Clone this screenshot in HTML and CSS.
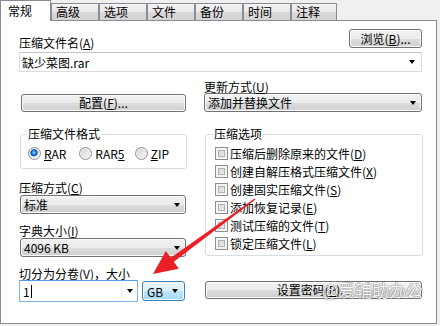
FILE: index.html
```html
<!DOCTYPE html>
<html lang="zh-CN">
<head>
    <meta charset="UTF-8">
    <title>压缩文件名和参数</title>
    <link rel="stylesheet" href="styles.css">
</head>
<body>
    <div class="dialog">
        <div class="tabs">
            <div class="tab active">常规</div>
            <div class="tab">高级</div>
            <div class="tab">选项</div>
            <div class="tab">文件</div>
            <div class="tab">备份</div>
            <div class="tab">时间</div>
            <div class="tab">注释</div>
        </div>

        <div class="panel">
            <div class="row-top">
                <div class="lbl">压缩文件名(<u>A</u>)</div>
                <button class="btn btn-browse">浏览(<u>B</u>)...</button>
            </div>
            <div class="combo combo-name">
                <span>缺少菜图.rar</span>
                <i class="arrow"></i>
            </div>

            <div class="cols row-mid">
                <div class="col">
                    <button class="btn btn-config">配置(<u>F</u>)...</button>
                </div>
                <div class="col">
                    <div class="lbl">更新方式(<u>U</u>)</div>
                    <div class="drop">添加并替换文件<i class="arrow"></i></div>
                </div>
            </div>

            <div class="cols row-low">
                <div class="col">
                    <fieldset class="group group-format">
                        <legend>压缩文件格式</legend>
                        <div class="radios">
                            <span class="radio on"><i></i><span><u>R</u>AR</span></span>
                            <span class="radio"><i></i><span>RAR<u>5</u></span></span>
                            <span class="radio"><i></i><span><u>Z</u>IP</span></span>
                        </div>
                    </fieldset>

                    <div class="lbl lbl-field">压缩方式(<u>C</u>)</div>
                    <div class="drop drop-left">标准<i class="arrow"></i></div>

                    <div class="lbl lbl-field">字典大小(<u>I</u>)</div>
                    <div class="drop drop-left">4096 KB<i class="arrow"></i></div>

                    <div class="lbl lbl-field">切分为分卷(<u>V</u>)，大小</div>
                    <div class="split">
                        <div class="combo combo-vol">
                            <span>1</span><span class="caret"></span>
                            <span class="arrow-box"><i class="arrow"></i></span>
                        </div>
                        <div class="drop drop-hot">GB<i class="arrow"></i></div>
                    </div>
                </div>

                <div class="col">
                    <fieldset class="group group-opts">
                        <legend>压缩选项</legend>
                        <div class="check"><i></i><span>压缩后删除原来的文件(<u>D</u>)</span></div>
                        <div class="check"><i></i><span>创建自解压格式压缩文件(<u>X</u>)</span></div>
                        <div class="check"><i></i><span>创建固实压缩文件(<u>S</u>)</span></div>
                        <div class="check"><i></i><span>添加恢复记录(<u>E</u>)</span></div>
                        <div class="check"><i></i><span>测试压缩的文件(<u>T</u>)</span></div>
                        <div class="check"><i></i><span>锁定压缩文件(<u>L</u>)</span></div>
                    </fieldset>
                    <button class="btn btn-pass">设置密码(<u>P</u>)...</button>
                </div>
            </div>
        </div>

        <!-- overlays from the screenshot: watermark and red pointer -->
        <div class="watermark">@爱辅助办公</div>
        <svg class="pointer" width="440" height="326" viewBox="0 0 440 326">
            <polygon fill="#ec1f26" points="254.5,198.4 255.5,199.6 173.8,261.8 178.8,268.7 153,274 165.8,250.9 170.8,257.8"/>
        </svg>
    </div>
</body>
</html>
```

FILE: styles.css
```css
body {
    margin: 0;
    background: #f0f0f0;
    font-family: "Noto Sans CJK SC", sans-serif;
    font-size: 12px;
    color: #000;
}

u {
    text-decoration: underline;
    text-underline-offset: 1px;
}

.dialog {
    position: relative;
    width: 440px;
    height: 326px;
}

/* tab strip */
.tabs {
    display: flex;
    align-items: flex-end;
    height: 20px;
}

.tab {
    box-sizing: border-box;
    width: 48px;
    height: 17px;
    border: 1px solid #898c95;
    border-bottom: none;
    background: linear-gradient(#f5f5f5, #e6e6e6 50%, #d9d9d9 51%, #d3d3d3);
    padding-left: 4px;
    line-height: 16px;
}

.tab:last-child {
    width: 46px;
}

.tab.active {
    position: relative;
    z-index: 1;
    width: 51px;
    height: 21px;
    margin-bottom: -1px;
    background: #fff;
    padding-left: 7px;
    line-height: 20px;
}

.panel {
    box-sizing: border-box;
    width: 437px;
    height: 304px;
    border: 1px solid #898c95;
    background: #fff;
    padding: 8px 14px 0 18px;
}

.lbl {
    line-height: 13px;
    white-space: nowrap;
}

.row-top {
    display: flex;
    align-items: flex-start;
    justify-content: space-between;
    height: 23px;
}

.row-top .lbl {
    margin-top: 7px;
    line-height: 14px;
}

/* buttons */
.btn {
    box-sizing: border-box;
    display: block;
    height: 19px;
    padding: 0;
    border: 1px solid #707070;
    border-radius: 3px;
    background: linear-gradient(#f2f2f2, #ebebeb 50%, #dddddd 51%, #cfcfcf);
    box-shadow: inset 0 0 0 1px #fcfcfc;
    font: inherit;
    line-height: 16px;
    color: #000;
    text-align: center;
    white-space: nowrap;
}

.btn-browse {
    width: 73px;
}

.btn-config {
    width: 165px;
    height: 18px;
    margin: 14px 0 0 2px;
}

.btn-pass {
    width: 217px;
    height: 18px;
    margin: 25px 0 0 1px;
}

/* combo boxes */
.arrow {
    width: 0;
    height: 0;
    margin-left: auto;
    border-top: 4px solid #000;
    border-left: 3.5px solid transparent;
    border-right: 3.5px solid transparent;
}

.combo {
    box-sizing: border-box;
    display: flex;
    align-items: center;
    background: #fff;
    border: 1px solid #d9dde3;
    border-top-color: #c3c7cd;
    white-space: nowrap;
}

.combo-name {
    height: 20px;
    padding: 0 6px 0 2px;
}

.drop {
    box-sizing: border-box;
    display: flex;
    align-items: center;
    height: 19px;
    padding: 0 5px 0 3px;
    border: 1px solid #707070;
    border-radius: 3px;
    background: linear-gradient(#f2f2f2, #ebebeb 50%, #dddddd 51%, #cfcfcf);
    box-shadow: inset 0 0 0 1px #fcfcfc;
    white-space: nowrap;
}

.drop-left {
    width: 166px;
    margin: 1px 0 0 1px;
}

.cols {
    display: grid;
    grid-template-columns: 168px 218px;
    column-gap: 17px;
}

.row-mid {
    margin-top: 8px;
}

.row-low {
    margin-top: 15px;
}

/* group boxes */
.group {
    box-sizing: border-box;
    margin: 0;
    min-width: 0;
    border: 1px solid #d5dfe5;
    border-radius: 3px;
}

.group legend {
    padding: 0 1px;
    line-height: 14px;
}

.group-format {
    width: 167px;
    margin-left: 1px;
    padding: 5px 0 8px 7px;
}

.group-format legend {
    margin-left: -1px;
}

.group-opts {
    width: 218px;
    margin-left: 1px;
    padding: 3px 0 3px 9px;
}

.group-opts legend {
    margin-left: -2px;
}

.radios {
    display: flex;
    align-items: center;
    height: 14px;
}

.radio {
    display: flex;
    align-items: center;
    gap: 3px;
    width: 52px;
}

.radio:nth-child(2) {
    width: 56px;
}

.radio i {
    box-sizing: border-box;
    width: 13px;
    height: 13px;
    border: 1px solid #8d9095;
    border-radius: 50%;
    background: linear-gradient(135deg, #cfd0d2, #f9f9f9);
    box-shadow: inset 0 0 0 1px #f2f2f2;
}

.radio.on i {
    background:
        radial-gradient(circle at 45% 42%, #a9dcff 0, #2f8fe0 1.6px, #0d57a6 3px, #3d86cb 3.6px, transparent 4.1px),
        linear-gradient(135deg, #cfd0d2, #f9f9f9);
}

.check {
    display: flex;
    align-items: center;
    gap: 2px;
    height: 18px;
    white-space: nowrap;
}

.check i {
    box-sizing: border-box;
    flex: none;
    width: 13px;
    height: 13px;
    border: 1px solid #8e8f8f;
    background: linear-gradient(135deg, #c8ccd1, #f6f6f6);
    box-shadow: inset 0 0 0 2px #f4f4f4, inset 0 0 0 3px #afb3b9;
}

.lbl-field {
    margin-top: 10px;
}

.group + .lbl-field {
    margin-top: 12px;
}

/* split volume row */
.split {
    display: flex;
    align-items: center;
    gap: 4px;
    height: 22px;
}

.combo-vol {
    width: 119px;
    height: 22px;
    padding-left: 3px;
    border-color: #7eb4ea;
    border-top-color: #569de5;
}

.caret {
    width: 1px;
    height: 13px;
    margin-left: 1px;
    background: #000;
}

.arrow-box {
    display: flex;
    align-items: center;
    justify-content: center;
    width: 15px;
    height: 100%;
    margin-left: auto;
    border-left: 1px solid #e6edf4;
}

.arrow-box .arrow {
    margin: 0;
}

.drop-hot {
    width: 43px;
    height: 20px;
    padding: 0 6px 0 4px;
    border-color: #3c7fb1;
    background: linear-gradient(#eaf6fd, #d9f0fc 50%, #bee6fd 51%, #a7d9f5);
    box-shadow: inset 0 0 0 1px #f4fbff;
}

/* screenshot overlays */
.watermark {
    position: absolute;
    left: 322px;
    top: 280px;
    font-size: 17px;
    line-height: 20px;
    color: #fff;
    opacity: 0.9;
    text-shadow: 0 0 1px #555, 0 0 1px #555;
    white-space: nowrap;
}

.pointer {
    position: absolute;
    left: 0;
    top: 0;
    pointer-events: none;
}
```
